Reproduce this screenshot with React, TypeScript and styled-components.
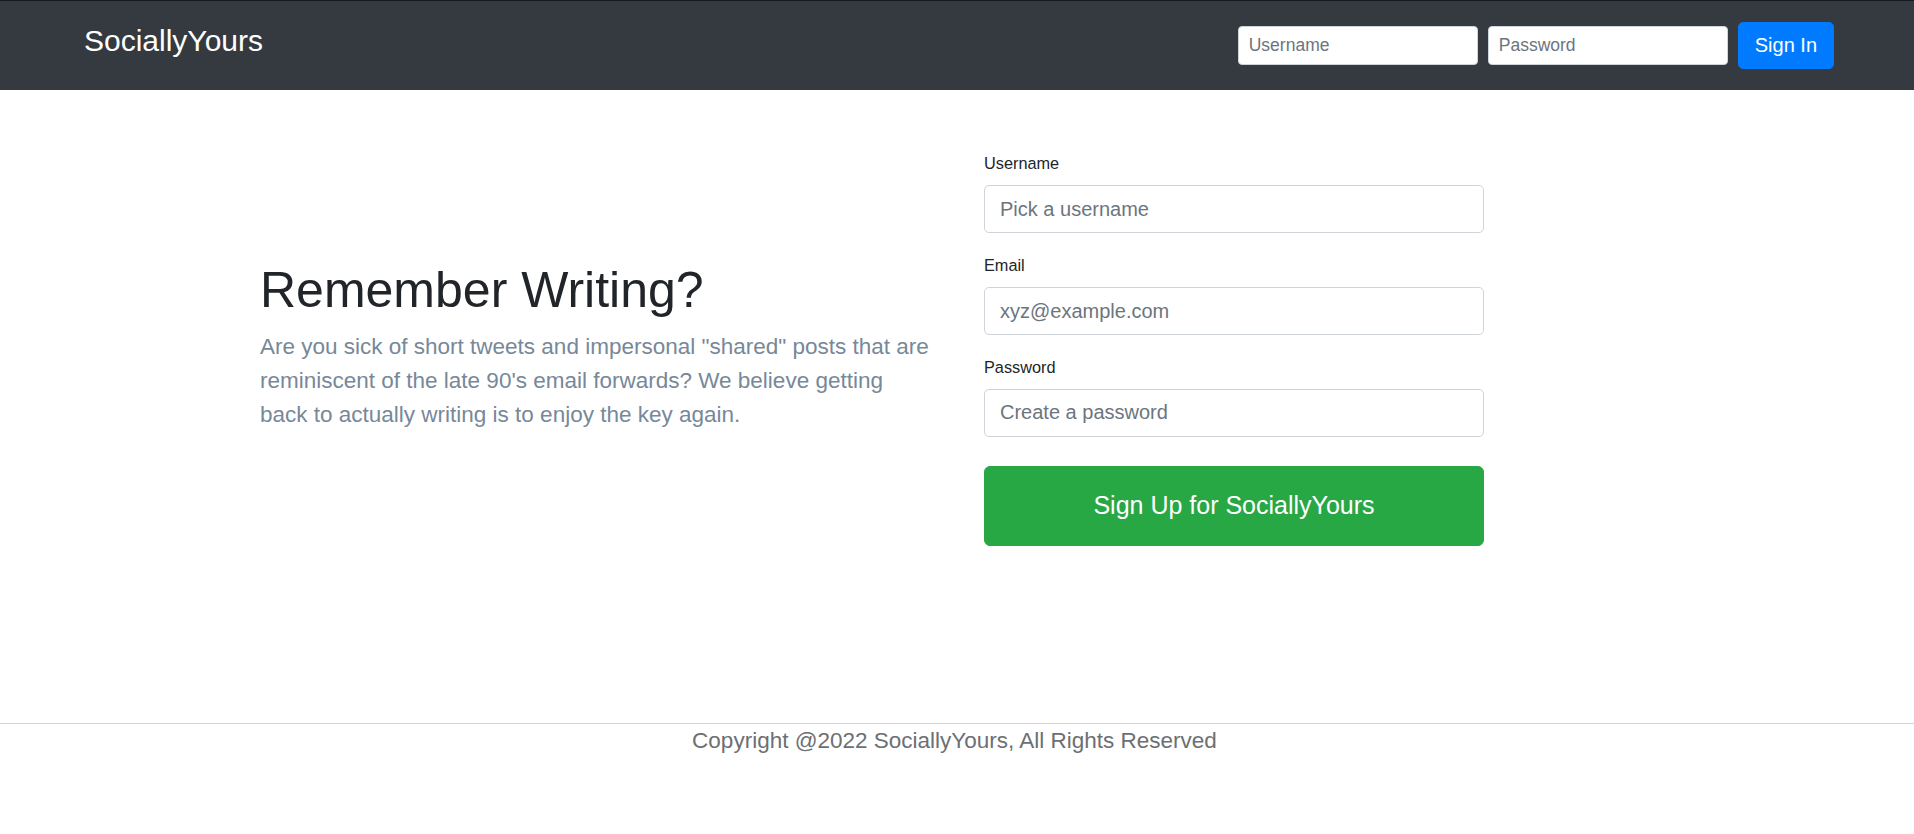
import React from "react";
import styled, { createGlobalStyle } from "styled-components";

const GlobalStyle = createGlobalStyle`
  * { box-sizing: border-box; }
  html, body { margin: 0; padding: 0; background: #ffffff; }
  body {
    font-family: "Liberation Sans", Arial, Helvetica, sans-serif;
    color: #212529;
  }
  input::placeholder { color: #6c757d; opacity: 1; }
`;

const NavBar = styled.header`
  height: 90px;
  background: #343a40;
  border-top: 1px solid #17191c;
  display: flex;
  align-items: center;
  justify-content: space-between;
  padding: 0 80px 0 84px;
`;

const Brand = styled.a`
  color: #ffffff;
  font-size: 30px;
  line-height: 1;
  text-decoration: none;
  margin-bottom: 9px;
`;

const SignInForm = styled.form`
  display: flex;
  align-items: center;
  gap: 10px;
`;

const SmallInput = styled.input`
  width: 240px;
  height: 39px;
  padding: 0 10px;
  font-family: inherit;
  font-size: 17.5px;
  color: #495057;
  background: #ffffff;
  border: 1px solid #ced4da;
  border-radius: 4px;
  outline: none;
`;

const SignInButton = styled.button`
  height: 47px;
  padding: 0 16px;
  font-family: inherit;
  font-size: 20px;
  color: #ffffff;
  background: #007bff;
  border: 1px solid #007bff;
  border-radius: 5px;
  cursor: pointer;
`;

const Main = styled.main`
  display: grid;
  grid-template-columns: 676px 500px;
  column-gap: 48px;
  align-items: center;
  padding: 61px 0 177px 260px;
`;

const Intro = styled.section`
  padding-bottom: 5px;
`;

const Headline = styled.h1`
  margin: 0 0 10px;
  font-size: 50px;
  font-weight: 400;
  line-height: 60px;
  color: #212529;
`;

const Lead = styled.p`
  margin: 0;
  font-size: 22.5px;
  line-height: 34.2px;
  color: #778899;
`;

const SignUpForm = styled.form`
  display: flex;
  flex-direction: column;
  gap: 20px;
`;

const FormGroup = styled.div`
  display: flex;
  flex-direction: column;
`;

const Label = styled.label`
  font-size: 16.3px;
  line-height: 24.4px;
  margin-bottom: 10px;
  color: #212529;
`;

const Field = styled.input`
  height: 47.5px;
  padding: 0 15px;
  font-family: inherit;
  font-size: 20px;
  color: #495057;
  background: #ffffff;
  border: 1px solid #ced4da;
  border-radius: 5px;
  outline: none;
`;

const SignUpButton = styled.button`
  margin-top: 9px;
  height: 80px;
  font-family: inherit;
  font-size: 25px;
  color: #ffffff;
  background: #28a745;
  border: 1px solid #28a745;
  border-radius: 6px;
  cursor: pointer;
`;

const Footer = styled.footer`
  border-top: 1px solid #d4d4d4;
  text-align: center;
  padding-right: 5px;
  font-size: 22.5px;
  line-height: 33.75px;
  color: #6c6f73;
`;

export default function App() {
  return (
    <>
      <GlobalStyle />
      <NavBar>
        <Brand href="#">SociallyYours</Brand>
        <SignInForm onSubmit={(e) => e.preventDefault()}>
          <SmallInput type="text" placeholder="Username" />
          <SmallInput type="password" placeholder="Password" />
          <SignInButton type="submit">Sign In</SignInButton>
        </SignInForm>
      </NavBar>
      <Main>
        <Intro>
          <Headline>Remember Writing?</Headline>
          <Lead>
            Are you sick of short tweets and impersonal "shared" posts that are
            reminiscent of the late 90's email forwards? We believe getting back
            to actually writing is to enjoy the key again.
          </Lead>
        </Intro>
        <SignUpForm onSubmit={(e) => e.preventDefault()}>
          <FormGroup>
            <Label htmlFor="su-username">Username</Label>
            <Field id="su-username" type="text" placeholder="Pick a username" />
          </FormGroup>
          <FormGroup>
            <Label htmlFor="su-email">Email</Label>
            <Field id="su-email" type="text" placeholder="xyz@example.com" />
          </FormGroup>
          <FormGroup>
            <Label htmlFor="su-password">Password</Label>
            <Field id="su-password" type="password" placeholder="Create a password" />
          </FormGroup>
          <SignUpButton type="submit">Sign Up for SociallyYours</SignUpButton>
        </SignUpForm>
      </Main>
      <Footer>Copyright @2022 SociallyYours, All Rights Reserved</Footer>
    </>
  );
}
